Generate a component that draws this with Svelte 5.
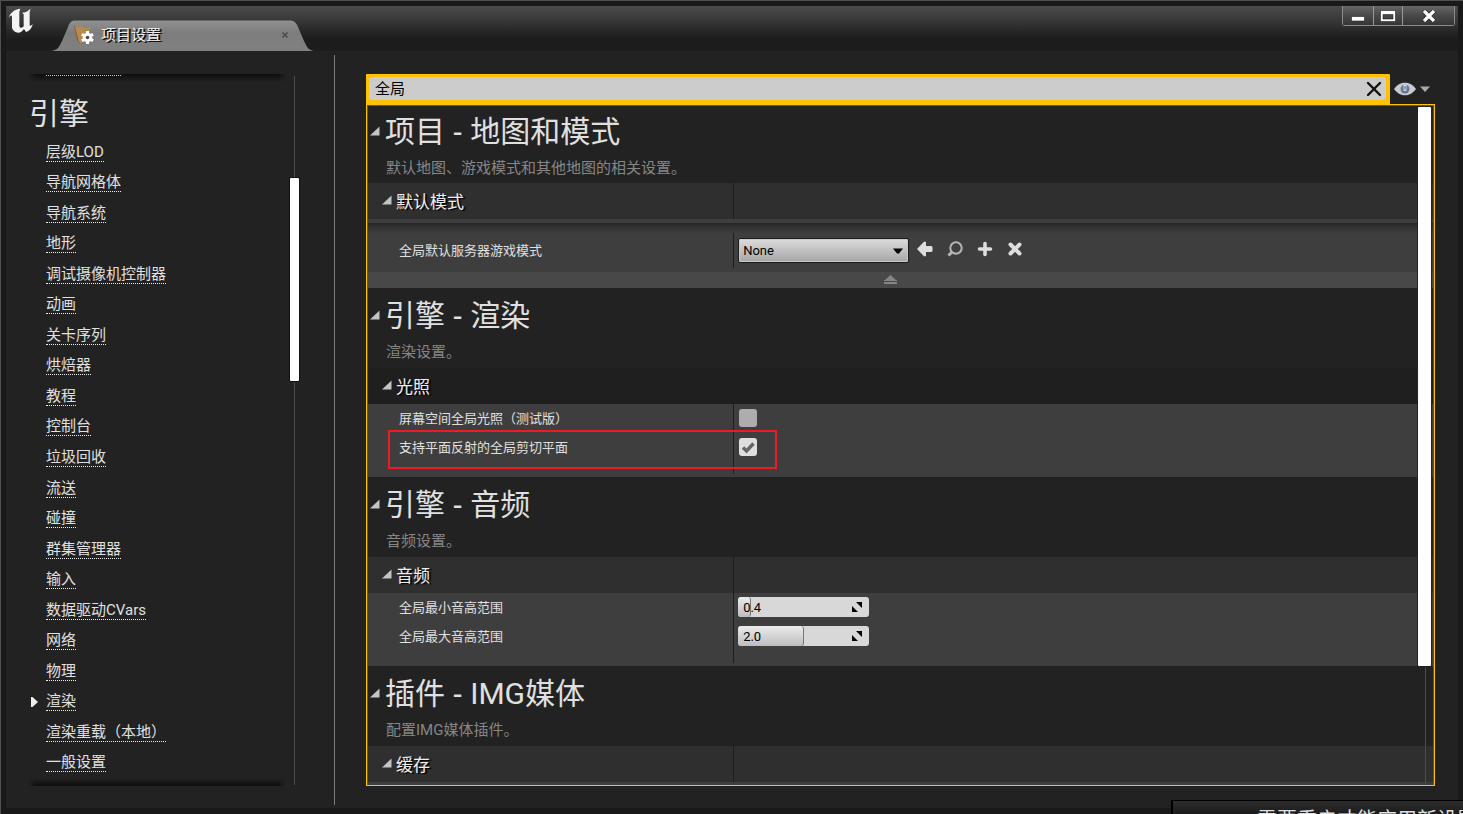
<script>
  const navItems = [
    '层级LOD', '导航网格体', '导航系统', '地形', '调试摄像机控制器', '动画', '关卡序列',
    '烘焙器', '教程', '控制台', '垃圾回收', '流送', '碰撞', '群集管理器', '输入',
    '数据驱动CVars', '网络', '物理', '渲染', '渲染重载（本地）', '一般设置'
  ];
  const current = '渲染';
  let query = $state('全局');
  let mode = $state('None');
  let screenGi = $state(false);
  let clipPlane = $state(true);
  let pitches = $state([
    { id: 'min-pitch', label: '全局最小音高范围', value: '0.4', fill: 10 },
    { id: 'max-pitch', label: '全局最大音高范围', value: '2.0', fill: 50 }
  ]);
</script>

{#snippet tri()}
  <svg class="tri" width="10" height="10" viewBox="0 0 10 10" aria-hidden="true"><path d="M9.500 .5V9.500H0Z" /></svg>
{/snippet}

{#snippet heading(group, title, text)}
  <header class="section-head">
    <h2>{@render tri()}<span>{group}<span class="dash">{' - '}</span>{title}</span></h2>
    <p>{text}</p>
  </header>
{/snippet}

{#snippet category(title, dark = false)}
  <div class="split category" class:dark>
    <h3>{@render tri()}{title}</h3>
    <div class="value"></div>
  </div>
{/snippet}

<div class="window">
  <div class="titlebar">
    <svg class="logo" width="26" height="26" viewBox="24 24 78 78" aria-hidden="true">
      <path d="M26 53C31 38 43 28 61 26L58 35V77C59 84 65 86 71 79V43L66 38C75 38 84 33 92 26L89 35V74C90 80 93 78 98 72C96 84 88 93 78 96L72 87C67 94 61 98 55 98C46 98 36 91 36 81V50C36 44 31 47 26 53Z" />
    </svg>
    <div class="tab">
      <svg class="tab-shape" viewBox="0 0 263 31" preserveAspectRatio="none" aria-hidden="true">
        <defs>
          <linearGradient id="tabfill" x1="0" y1="0" x2="0" y2="1">
            <stop offset="0" stop-color="#919191" /><stop offset=".4" stop-color="#7d7d7d" /><stop offset="1" stop-color="#808080" />
          </linearGradient>
        </defs>
        <path d="M0 31C7 30 8 27 11 21L17 7C19 2 20 .5 25 .5H238C243 .5 245 2 247 7L253 21C256 27 257 30 263 31Z" fill="url(#tabfill)" />
      </svg>
      <svg class="tab-icon" width="20" height="20" viewBox="0 0 20 20" aria-hidden="true">
        <path d="M0 1L4 3L6 19L3 15Z" fill="#8c5e2e" />
        <path d="M1 2L7 1L10 3L16 2L15 9L7 18L5 17Z" fill="#b98a50" />
        <path d="M10 4L15 5L12 9Z" fill="#8a9c35" />
        <g transform="translate(13.500 12.500)">
          <g fill="#fff">
            <circle r="4.800" />
            {#each [0, 60, 120] as a}
              <rect x="-1.500" y="-6.500" width="3" height="13" transform="rotate({a})" />
            {/each}
          </g>
          <circle r="1.800" fill="#5c4a38" />
        </g>
      </svg>
      <span class="tab-title">项目设置</span>
      <button class="tab-close" aria-label="关闭标签">
        <svg width="8" height="8" viewBox="0 0 8 8"><path d="M1.500 1.500L6.500 6.500M6.500 1.500L1.500 6.500" stroke="#4c4c4c" stroke-width="1.600" /></svg>
      </button>
    </div>
    <div class="window-buttons">
      <button class="wb min" aria-label="最小化"><svg width="14" height="12" viewBox="0 0 14 12"><path d="M.5 6.500H13.500V11H.5Z" fill="#fff" stroke="#222" stroke-width=".6" /></svg></button>
      <button class="wb max" aria-label="最大化"><svg width="16" height="12" viewBox="0 0 16 12"><path d="M.5 .5H15.500V11.500H.5ZM3 4.500V9H13V4.500Z" fill="#fff" fill-rule="evenodd" stroke="#222" stroke-width=".6" /></svg></button>
      <button class="wb close" aria-label="关闭"><svg width="14" height="14" viewBox="0 0 14 14"><path d="M2 2L12 12M12 2L2 12" stroke="#222" stroke-width="4.600" /><path d="M2 2L12 12M12 2L2 12" stroke="#fff" stroke-width="3.200" /></svg></button>
    </div>
  </div>

  <div class="body">
    <aside>
      <nav>
        <span class="clipped-line"></span>
        <h1>引擎</h1>
        <ul>
          {#each navItems as item}
            <li class:current={item === current}>
              {#if item === current}
                <svg class="marker" width="7" height="10" viewBox="0 0 7 10" aria-hidden="true"><path d="M0 0H1.500L7 5L1.500 10H0Z" fill="#eee" /></svg>
              {/if}
              <a href="#{item}">{item}</a>
            </li>
          {/each}
        </ul>
      </nav>
      <div class="nav-scroll"><div class="nav-thumb"></div></div>
    </aside>

    <main>
      <div class="search-row">
        <div class="search">
          <input type="text" aria-label="搜索" bind:value={query} />
          <button aria-label="清除搜索" onclick={() => (query = '')}>
            <svg width="16" height="16" viewBox="0 0 16 16"><path d="M2 2L14 14M14 2L2 14" stroke="#111" stroke-width="2.400" stroke-linecap="round" /></svg>
          </button>
        </div>
        <button class="view" aria-label="视图选项">
          <svg width="37" height="14" viewBox="0 0 37 14">
            <path d="M0 7C4 2 7 .8 11 .8S18 2 22 7C18 12 15 13.200 11 13.200S4 12 0 7Z" fill="#c9cbcd" />
            <circle cx="11" cy="7" r="4.500" fill="#63789c" />
            <path d="M9.500 2.500V7.500A1.500 1.500 0 0 0 12.500 7.500V2.500Z" fill="#dfe5ee" />
            <path d="M10.500 4H11.500V7.500H10.500Z" fill="#344765" />
            <path d="M26 4.500H36L31 10Z" fill="#aaa" />
          </svg>
        </button>
      </div>

      <div class="details">
        <section>
          {@render heading('项目', '地图和模式', '默认地图、游戏模式和其他地图的相关设置。')}
          {@render category('默认模式')}
          <div class="strip"></div>
          <div class="split row asset">
            <label for="mode">全局默认服务器游戏模式</label>
            <div class="value">
              <div class="combo">
                <select id="mode" bind:value={mode}><option>None</option></select>
                <svg width="10" height="6" viewBox="0 0 10 6" aria-hidden="true"><path d="M0 .5H10L6 5.500H4Z" /></svg>
              </div>
              <button class="icon" aria-label="使用选中项"><svg width="16" height="16" viewBox="0 0 16 16"><path d="M0 8L7 .8H9V5H14Q15.500 5 15.500 6.500V9.500Q15.500 11 14 11H9V15.200H7Z" fill="#ddd" /></svg></button>
              <button class="icon" aria-label="浏览"><svg width="16" height="16" viewBox="0 0 16 16"><circle cx="9" cy="7" r="5.700" fill="none" stroke="#b5b5b5" stroke-width="2" /><path d="M5 11L1.500 14.500" stroke="#b5b5b5" stroke-width="3" /></svg></button>
              <button class="icon" aria-label="新建"><svg width="16" height="16" viewBox="0 0 16 16"><path d="M8 2.500V13.500M2.500 8H13.500" stroke="#ddd" stroke-width="3.600" stroke-linecap="round" /></svg></button>
              <button class="icon" aria-label="清空"><svg width="16" height="16" viewBox="0 0 16 16"><path d="M3.500 3.500L12.500 12.500M12.500 3.500L3.500 12.500" stroke="#ddd" stroke-width="4" stroke-linecap="round" /></svg></button>
            </div>
          </div>
          <button class="collapse" aria-label="收起高级属性">
            <svg width="13" height="9" viewBox="0 0 13 9"><path d="M6.500 0L12 5H1ZM0 5H13V6H0ZM0 7H13V9H0Z" fill="#858585" /></svg>
          </button>
        </section>

        <section>
          {@render heading('引擎', '渲染', '渲染设置。')}
          {@render category('光照', true)}
          <div class="rows">
            <div class="split row">
              <label for="gi">屏幕空间全局光照（测试版）</label>
              <div class="value"><input id="gi" type="checkbox" bind:checked={screenGi} /></div>
            </div>
            <div class="split row">
              <label for="clip">支持平面反射的全局剪切平面</label>
              <div class="value"><input id="clip" type="checkbox" bind:checked={clipPlane} /></div>
            </div>
            <div class="split tail"><div></div><div class="value"></div></div>
            <div class="callout"></div>
          </div>
        </section>

        <section>
          {@render heading('引擎', '音频', '音频设置。')}
          {@render category('音频')}
          <div class="rows">
            {#each pitches as p}
              <div class="split row">
                <label for={p.id}>{p.label}</label>
                <div class="value">
                  <div class="spin">
                    <div class="fill" style="width: {p.fill}%"></div>
                    <input id={p.id} type="text" bind:value={p.value} />
                    <svg width="12" height="12" viewBox="0 0 12 12" aria-hidden="true"><path d="M5 1H11V7ZM1 5V11H7Z" /></svg>
                  </div>
                </div>
              </div>
            {/each}
            <div class="split tail"><div></div><div class="value"></div></div>
          </div>
        </section>

        <section>
          {@render heading('插件', 'IMG媒体', '配置IMG媒体插件。')}
          {@render category('缓存')}
          <div class="strip"></div>
        </section>
        <div class="main-scroll"></div>
      </div>
    </main>
  </div>

  <div class="toast" role="status">需要重启才能应用新设置</div>
</div>

<style>
  :global(body) {
    margin: 0;
    overflow: hidden;
    background: #1a1a1a;
  }
  * {
    box-sizing: border-box;
  }
  h1, h2, h3, p, ul {
    margin: 0;
    padding: 0;
    font-weight: 400;
  }
  button {
    padding: 0;
    border: 0;
    background: none;
    display: flex;
    align-items: center;
    justify-content: center;
  }
  svg {
    display: block;
    flex: none;
  }
  .window {
    position: relative;
    display: flex;
    flex-direction: column;
    height: 100vh;
    padding: 5px 5px 6px;
    overflow: hidden;
    border: 1px solid #505050;
    border-width: 1px 0 0 1px;
    background: #191919;
    color: #e0e0e0;
    font-family: Roboto, "Noto Sans CJK SC", sans-serif;
    font-size: 15px;
  }
  .titlebar {
    display: flex;
    align-items: flex-start;
    height: 45px;
    flex: none;
    background: linear-gradient(#4b4b4b, #3c3c3c 25%, #242424 60%, #1c1c1c 75%, #1d1d1d);
  }
  .logo {
    margin: 2px 0 0 2px;
    fill: #f4f4f4;
  }
  .tab {
    position: relative;
    display: flex;
    align-items: center;
    align-self: flex-end;
    width: 263px;
    height: 31px;
    margin-left: 17px;
    padding: 0 23px 2px;
  }
  .tab-shape {
    position: absolute;
    inset: 0;
    width: 100%;
    height: 100%;
  }
  .tab-icon {
    position: relative;
  }
  .tab-title {
    position: relative;
    flex: 1;
    margin-left: 7px;
    line-height: 22px;
    color: #eee;
    text-shadow: 1px 1px 0 #111, 2px 1px 0 #111;
  }
  .tab-close {
    position: relative;
    width: 12px;
    height: 16px;
  }
  .window-buttons {
    display: flex;
    margin-left: auto;
    margin-right: 3px;
    height: 20px;
    border: 1px solid #8d8d8d;
    border-top: 0;
    border-radius: 0 0 3px 3px;
  }
  .wb {
    background: linear-gradient(#666, #494949 50%, #353535);
    border-right: 1px solid #999;
  }
  .min { width: 31px; }
  .max { width: 29px; }
  .close { width: 51px; border-right: 0; }
  .body {
    display: flex;
    flex: 1;
    min-height: 0;
    background: #222;
  }
  aside {
    display: flex;
    flex: none;
    width: 329px;
    margin: 4px 0 3px;
    padding: 19px 35px 20px 23px;
    border-right: 1px solid #7c7c7c;
  }
  nav {
    position: relative;
    display: flex;
    flex-direction: column;
    flex: 1;
    padding-top: 1px;
  }
  nav::before,
  nav::after {
    content: "";
    position: absolute;
    left: 0;
    right: 4px;
    height: 8px;
    top: 0;
    background: linear-gradient(#0d0d0d, #222);
    mask-image: linear-gradient(90deg, transparent, #000 3%, #000 97%, transparent);
  }
  nav::after {
    top: auto;
    bottom: -1px;
    background: linear-gradient(#222, #0d0d0d);
  }
  .clipped-line {
    position: relative;
    z-index: 1;
    width: 75px;
    margin-left: 17px;
    border-top: 1px dotted #ccc;
  }
  h1 {
    margin-top: 15px;
    font-size: 30px;
    line-height: 46px;
  }
  ul {
    display: grid;
    flex: 1;
    grid-auto-rows: 1fr;
    list-style: none;
    padding-bottom: 7px;
  }
  li {
    display: flex;
    align-items: center;
    padding-left: 17px;
  }
  li.current {
    padding-left: 2px;
  }
  .marker {
    margin-right: 8px;
  }
  a {
    color: #e0e0e0;
    line-height: 18px;
    text-decoration: none;
    border-bottom: 1px dotted #eee;
  }
  .nav-scroll {
    flex: none;
    width: 9px;
    margin-top: 2px;
    padding-top: 102px;
    background: linear-gradient(#4c4c4c, #4c4c4c) 4px 0 / 1px 100% no-repeat;
  }
  .nav-thumb {
    height: 29%;
    min-height: 203px;
    background: #fff;
    border-radius: 1px;
    box-shadow: 0 0 0 1px #111;
  }
  main {
    display: flex;
    flex: 1;
    flex-direction: column;
    min-width: 0;
    padding: 23px 23px 22px 31px;
  }
  .search-row {
    display: flex;
    flex: none;
    height: 30px;
  }
  .search {
    display: flex;
    flex: 1;
    padding: 3px 4px 4px 3px;
    background: #ffc200;
    border-radius: 1px 1px 0 0;
  }
  .search input {
    flex: 1;
    min-width: 0;
    padding: 0 6px 2px;
    border: 0;
    outline: 0;
    border-radius: 3px 0 0 3px;
    background: #ccc;
    color: #000;
    font: inherit;
  }
  .search button {
    width: 24px;
    background: #ccc;
    border-radius: 0 3px 3px 0;
  }
  .view {
    flex: none;
    width: 45px;
  }
  .details {
    position: relative;
    flex: 1;
    min-height: 0;
    overflow: hidden;
    border: 1px solid #ffc200;
    box-shadow: inset 0 0 0 1px #6b560f;
    padding: 0 1px;
  }
  .tri {
    fill: #c4c4c4;
  }
  .section-head {
    display: flex;
    flex-direction: column;
    height: 80px;
    padding-top: 1px;
  }
  section:first-child .section-head {
    height: 78px;
    padding-top: 0;
  }
  h2 {
    display: flex;
    align-items: center;
    gap: 5px;
    padding-left: 2px;
    font-size: 30px;
    line-height: 54px;
    white-space: pre;
  }
  h2 .tri {
    margin-bottom: 2px;
  }
  .dash {
    font-family: "Noto Sans", sans-serif;
    line-height: 1;
  }
  h3 {
    display: flex;
    align-items: center;
    gap: 4px;
    padding: 0 0 2px 14px;
    font-size: 17px;
    color: #eee;
    text-shadow: 2px 1px 1px #000;
  }
  .section-head p {
    padding-left: 18px;
    line-height: 18px;
    color: #868686;
  }
  .split {
    display: grid;
    grid-template-columns: minmax(0, 12fr) minmax(0, 23fr);
  }
  .value {
    display: flex;
    align-items: center;
    padding: 0 0 1px 4px;
    border-left: 1px solid #1d1d1d;
  }
  .category {
    height: 36px;
    background: #2f2f2f;
  }
  .category.dark {
    background: #1f1f1f;
  }
  .strip {
    height: 4px;
    background: #3e3e3e;
  }
  .row {
    height: 29px;
    font-size: 13px;
  }
  .row label {
    display: flex;
    align-items: center;
    padding: 0 0 3px 31px;
  }
  .asset {
    height: 49px;
    padding: 10px 0 4px;
    background: linear-gradient(#252525, #343434 10%, #3e3e3e 22%);
  }
  .asset .value {
    padding-bottom: 0;
  }
  .rows {
    position: relative;
    background: #3e3e3e;
  }
  .tail {
    height: 15px;
    padding-bottom: 3px;
  }
  .combo {
    position: relative;
    display: flex;
    align-items: center;
    margin-right: 8px;
  }
  .combo select {
    appearance: none;
    width: 171px;
    height: 25px;
    padding: 0 4px;
    border: 1px solid #1c1c1c;
    border-radius: 2px;
    box-shadow: inset 0 0 0 1px #c9c9c9;
    background: linear-gradient(#dcdcdc, #a6a6a6);
    color: #000;
    font: inherit;
  }
  .combo svg {
    position: absolute;
    right: 6px;
    pointer-events: none;
  }
  .icon {
    width: 16px;
    height: 16px;
    margin: 0 14px 3px 0;
  }
  .collapse {
    width: 100%;
    height: 16px;
    background: #484848;
    padding: 0 20px 2px 0;
  }
  input[type="checkbox"] {
    appearance: none;
    width: 18px;
    height: 18px;
    margin: 0 0 0 1px;
    border-radius: 3px;
    background: #adadad;
  }
  input[type="checkbox"]:checked {
    background: #dedede url("data:image/svg+xml,%3Csvg xmlns='http://www.w3.org/2000/svg' viewBox='0 0 18 18'%3E%3Cpath d='M4 9.500L7.500 13L14.500 5.500' fill='none' stroke='%23666' stroke-width='3.400'/%3E%3C/svg%3E") center / 18px no-repeat;
  }
  .callout {
    position: absolute;
    top: 26px;
    left: 20px;
    width: 389px;
    height: 39px;
    border: 2px solid #ed1c24;
    pointer-events: none;
  }
  .spin {
    position: relative;
    display: flex;
    align-items: center;
    width: 131px;
    height: 20px;
    border-radius: 3px;
    background: #d8d8d8;
    overflow: hidden;
  }
  .fill {
    position: absolute;
    inset: 0 auto 0 0;
    background: linear-gradient(#ececec, #bdbdbd);
    border-right: 1px solid #777;
    border-radius: 3px;
  }
  .spin input {
    position: relative;
    flex: 1;
    min-width: 0;
    padding: 0 5px;
    border: 0;
    background: none;
    color: #000;
    font: inherit;
  }
  .spin svg {
    position: relative;
    margin-right: 6px;
  }
  .main-scroll {
    position: absolute;
    top: 2px;
    right: 3px;
    bottom: 2px;
    width: 13px;
    background: linear-gradient(#4c4c4c, #4c4c4c) 7px 0 / 1px 100% no-repeat;
  }
  .main-scroll::before {
    content: "";
    display: block;
    height: calc(83% - 2px);
    background: #fff;
    border-radius: 1px;
    box-shadow: 0 0 0 1px #222;
  }
  .toast {
    position: absolute;
    right: 0;
    bottom: 0;
    width: 292px;
    height: 14px;
    padding-left: 84px;
    overflow: hidden;
    border: solid #000;
    border-width: 1px 0 0 2px;
    background: linear-gradient(#2d2d2d, #1c1c1c);
    font-size: 20px;
    line-height: 38px;
    white-space: nowrap;
  }
</style>
